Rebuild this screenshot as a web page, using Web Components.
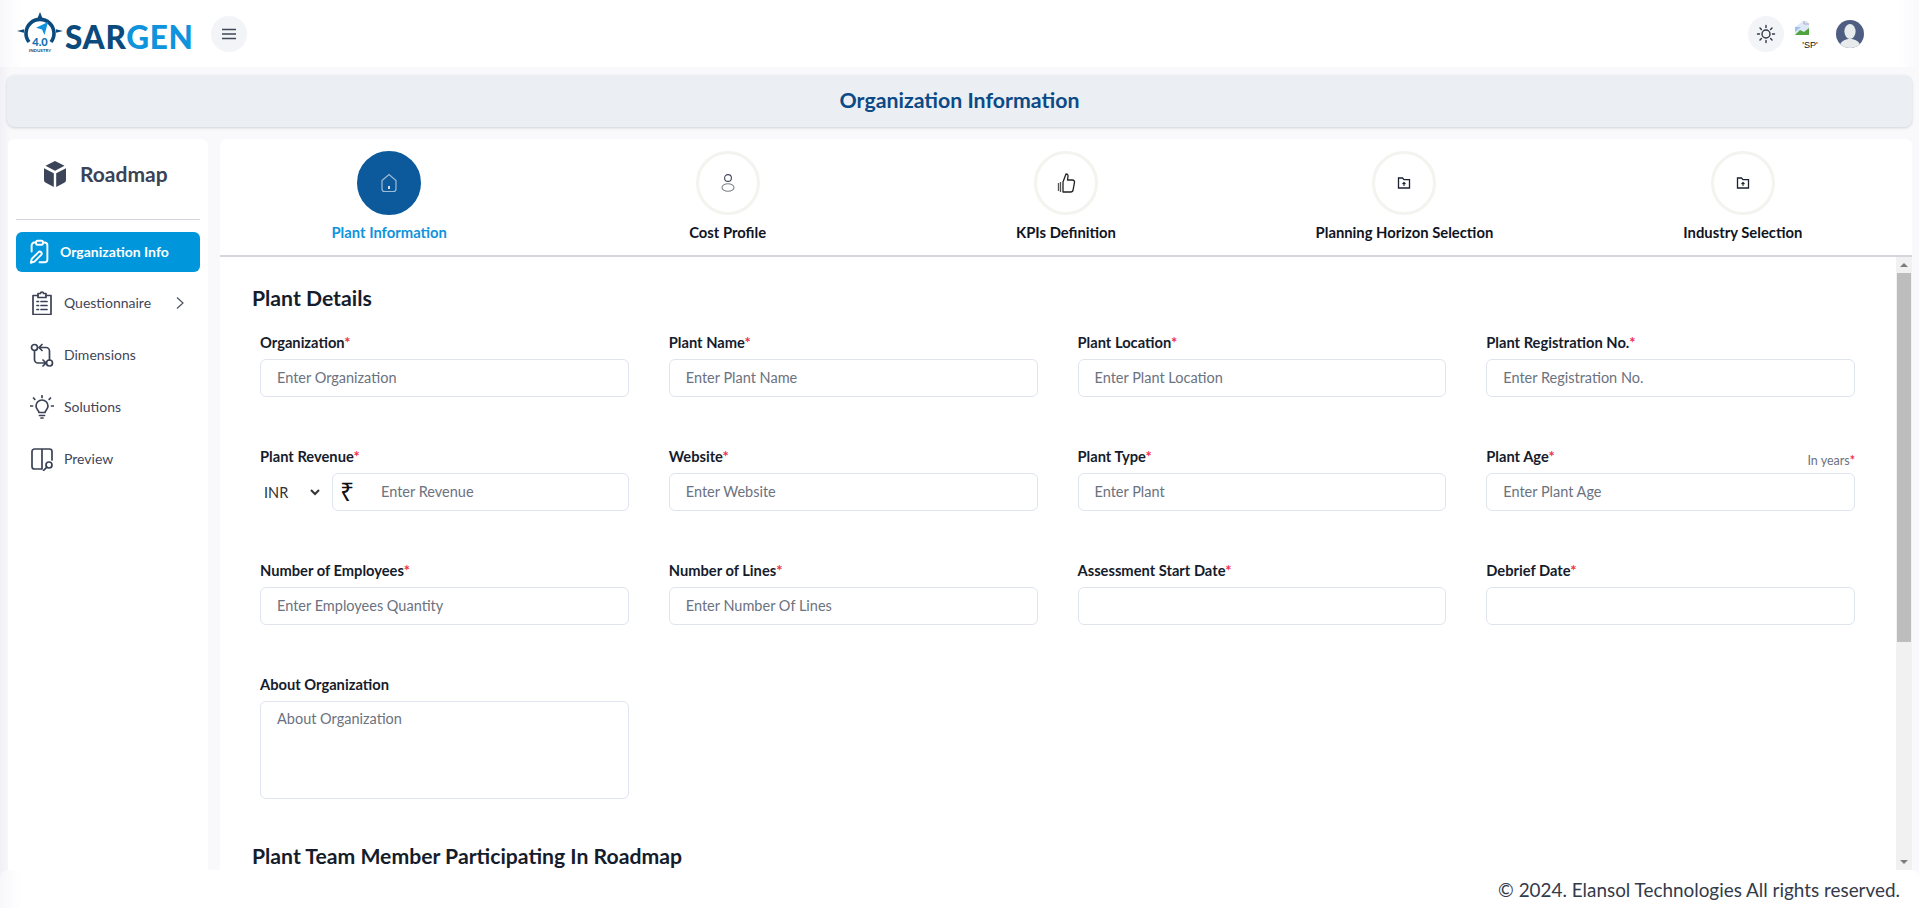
<!DOCTYPE html>
<html lang="en">
<head>
<meta charset="utf-8">
<title>Organization Information</title>
<style>
  html, body { margin: 0; height: 100%; }
  body { overflow: hidden; font-family: Lato, "Noto Sans", sans-serif; }
</style>
</head>
<body>
<app-shell></app-shell>

<script>
const FONT = `Lato, "Noto Sans", sans-serif`;

class AppShell extends HTMLElement {
  constructor() {
    super();
    this.attachShadow({ mode: "open" });
    this.shadowRoot.innerHTML = /*html*/ `
      <style>
        :host {
          display: flex;
          flex-direction: column;
          height: 908px;
          background: linear-gradient(to right, #f0f0f6 0, #f9f9fb 10px);
          font-family: ${FONT};
        }
        .body {
          flex: 1;
          min-height: 0;
          display: flex;
          gap: 12px;
          padding: 0 7px 0 8px;
        }
      </style>
      <app-header></app-header>
      <page-title>Organization Information</page-title>
      <div class="body">
        <side-nav></side-nav>
        <main-panel></main-panel>
      </div>
      <site-footer>© 2024. Elansol Technologies All rights reserved.</site-footer>
    `;
  }
}

class AppHeader extends HTMLElement {
  constructor() {
    super();
    this.attachShadow({ mode: "open" });
    this.shadowRoot.innerHTML = /*html*/ `
      <style>
        :host {
          display: flex;
          align-items: center;
          flex: 0 0 67px;
          box-sizing: border-box;
          padding: 0 55px 0 17px;
          background: linear-gradient(to right, #f8f8fb 0, #fff 22px, #fff calc(100% - 22px), #f9f9fb 100%);
        }
        .logo { display: flex; align-items: center; width: 194px; }
        .logo svg { display: block; flex: none; position: relative; top: -2px; }
        .word {
          font: 900 31.500px/1 ${FONT};
          letter-spacing: .7px;
          color: #0b4a7c;
          margin-left: 2px;
          position: relative;
          top: 4px;
        }
        .word b { font-weight: 900; color: #0f93dd; }
        .round {
          width: 36px;
          height: 36px;
          border-radius: 50%;
          background: #f3f4f8;
          display: grid;
          place-items: center;
        }
        .right { margin-left: auto; display: flex; align-items: center; }
        .broken {
          width: 24px;
          height: 28px;
          margin: 0 18px 0 10px;
          font: 9px/8px "Liberation Sans", sans-serif;
          color: #111;
          text-align: center;
        }
        .broken svg { display: block; margin-bottom: 5px; }
        .broken span { display: block; padding-left: 8px; white-space: nowrap; }
        .avatar { display: block; }
      </style>
      <div class="logo">
        <svg width="46" height="40" viewBox="0 0 46 40">
          <path d="M23 0l2.400 6h-4.800zM0 19l7-1.800v3.600zM46 19l-7-1.800v3.600z" fill="#0b4a7c"/>
          <path d="M12 30a14 14 0 1 1 22 0" fill="none" stroke="#0b4a7c" stroke-width="3.600"/>
          <path d="M31 10l-3.500 13-2.500-5.500-6-1.800z" fill="#0f93dd"/>
          <text x="23" y="34" text-anchor="middle" font-family="Lato" font-weight="900" font-size="11" fill="#0f6fb4">4.0</text>
          <text x="23" y="39.500" text-anchor="middle" font-family="Lato" font-weight="700" font-size="4.500" fill="#0b4a7c">INDUSTRY</text>
        </svg>
        <span class="word">SAR<b>GEN</b></span>
      </div>
      <div class="round">
        <svg width="18" height="18" viewBox="0 0 18 18" fill="none" stroke="#3f4757" stroke-width="1.400">
          <path d="M2 4.500h14M2 9h14M2 13.500h14"/>
        </svg>
      </div>
      <div class="right">
        <div class="round">
          <svg width="20" height="20" viewBox="0 0 20 20" fill="none" stroke="#2f3746" stroke-width="1.400" stroke-linecap="round">
            <circle cx="10" cy="10" r="4"/>
            <path d="M10 1.500v2M10 16.500v2M1.500 10h2M16.500 10h2M4 4l1.400 1.400M14.600 14.600L16 16M4 16l1.400-1.400M14.600 5.400L16 4"/>
          </svg>
        </div>
        <div class="broken">
          <svg width="16" height="16" viewBox="0 0 16 16">
            <path d="M1 7l8-6h4l2 3v11H1z" fill="#dfe8f7"/>
            <path d="M10 1v3h5" fill="none" stroke="#aab" stroke-width="1"/>
            <path d="M1 15l5-5 4 2 5-4v7z" fill="#4da53b"/>
            <path d="M1 7l6 0-6 5z" fill="#9fc0ef"/>
          </svg>
          <span>'SP'</span>
        </div>
        <svg class="avatar" width="28" height="28" viewBox="0 0 28 28">
          <defs><clipPath id="av"><circle cx="14" cy="14" r="14"/></clipPath></defs>
          <g clip-path="url(#av)">
            <rect width="28" height="28" fill="#505d83"/>
            <ellipse cx="14" cy="11.500" rx="5.600" ry="7.500" fill="#e7ebec"/>
            <path d="M3 28c1-7 6-9 11-9s10 2 11 9z" fill="#e7ebec"/>
          </g>
        </svg>
      </div>
    `;
  }
}

class PageTitle extends HTMLElement {
  constructor() {
    super();
    this.attachShadow({ mode: "open" });
    this.shadowRoot.innerHTML = /*html*/ `
      <style>
        :host {
          display: flex;
          align-items: center;
          justify-content: center;
          flex: 0 0 52px;
          margin: 8px 7px 12px 7px;
          border-radius: 8px;
          background: #ebeef3;
          box-shadow: 0 1px 3px rgba(0, 0, 0, .16);
          color: #0b4a86;
          font-size: 21.300px;
          line-height: 50px;
          font-weight: 700;
          padding-bottom: 2px;
          box-sizing: border-box;
        }
      </style>
      <slot></slot>
    `;
  }
}

const NAV_ICONS = {
  org: `<path d="M9 4H7.500A2.500 2.500 0 0 0 5 6.500V12M15 4h1.500A2.500 2.500 0 0 1 19 6.500V19a2.500 2.500 0 0 1-2.500 2.500H12"/><rect x="9" y="2.500" width="6" height="3.500" rx="1"/><path d="M4.300 22l.8-3.400 6-6a1.700 1.700 0 0 1 2.400 2.400l-6 6z"/>`,
  quest: `<path d="M8 4.500H3v19h18v-19h-5"/><path d="M8 2.500h2.500a1.500 1.500 0 0 1 3 0H16v4H8z"/><path d="M7 10.500h1.500M7 14.500h1.500M7 18.500h1.500M11 10.500h6M11 14.500h6M11 18.500h6"/>`,
  dim: `<circle cx="4.500" cy="4.500" r="3"/><circle cx="19.500" cy="20" r="3"/><path d="M4.500 7.500v9a3.500 3.500 0 0 0 3.500 3.500h8M13 17l3 3-3 3M19.500 17V8a3.500 3.500 0 0 0-3.500-3.500H9M12 1.500l-3 3 3 3"/>`,
  sol: `<path d="M9 17.500c0-2-3-3-3-6.500a6 6 0 0 1 12 0c0 3.500-3 4.500-3 6.500z"/><path d="M9.500 20.500h5M11 23h2M12 .8v1.700M3.500 3l1.300 1.300M20.500 3l-1.300 1.300M.5 11h2M21.500 11h2"/>`,
  prev: `<path d="M12 22H4.500A2.500 2.500 0 0 1 2 19.500v-15A2.500 2.500 0 0 1 4.500 2h15A2.500 2.500 0 0 1 22 4.500V13M12 2v20"/><circle cx="19" cy="18" r="3"/><path d="M16.800 20.200L13.500 23.500"/>`
};

class SideNav extends HTMLElement {
  constructor() {
    super();
    this.attachShadow({ mode: "open" });
    this.shadowRoot.innerHTML = /*html*/ `
      <style>
        :host {
          display: block;
          flex: 0 0 200px;
          box-sizing: border-box;
          background: #fff;
          border-radius: 6px 6px 0 0;
          padding: 0 8px;
        }
        .brand {
          height: 81px;
          display: flex;
          align-items: center;
          gap: 13px;
          padding: 0 0 11px 27px;
          box-sizing: border-box;
          border-bottom: 1px solid #d2d4dd;
          font-size: 21px;
          font-weight: 700;
          color: #3b4356;
        }
        .items { display: flex; flex-direction: column; gap: 12px; padding-top: 12px; }
      </style>
      <div class="brand">
        <svg width="24" height="26" viewBox="0 0 24 26" fill="#3b4458">
          <path d="M12 0l9.500 4.800L12 9.800 2.500 4.800z"/>
          <path d="M1 7.200l9.800 5V26L2.800 21.800A3 3 0 0 1 1 19z"/>
          <path d="M23 7.200l-9.800 5V26l8-4.200A3 3 0 0 0 23 19z"/>
        </svg>
        Roadmap
      </div>
      <div class="items">
        <nav-item icon="org" active>Organization Info</nav-item>
        <nav-item icon="quest" more>Questionnaire</nav-item>
        <nav-item icon="dim">Dimensions</nav-item>
        <nav-item icon="sol">Solutions</nav-item>
        <nav-item icon="prev">Preview</nav-item>
      </div>
    `;
  }
}

class NavItem extends HTMLElement {
  constructor() {
    super();
    this.attachShadow({ mode: "open" });
  }

  connectedCallback() {
    const more = this.hasAttribute("more")
      ? `<svg class="more" width="12" height="14" viewBox="0 0 12 14" fill="none" stroke="#4b5364" stroke-width="1.200"><path d="M3 1.500L9 7l-6 5.500"/></svg>`
      : "";
    const size = this.hasAttribute("active") ? 27 : 24;
    this.shadowRoot.innerHTML = /*html*/ `
      <style>
        :host {
          display: flex;
          align-items: center;
          height: 40px;
          box-sizing: border-box;
          padding: 0 0 3px 14px;
          gap: 10px;
          border-radius: 6px;
          font-size: 14px;
          color: #3f4658;
        }
        :host([active]) {
          background: #0096dc;
          color: #fff;
          font-weight: 700;
          padding: 0 0 2px 10px;
          gap: 7px;
        }
        svg.icon { flex: none; stroke: #3b4256; }
        :host([active]) svg.icon { stroke: #fff; }
        .more { margin-left: auto; margin-right: 14px; }
      </style>
      <svg class="icon" width="${size}" height="${size}" viewBox="0 0 24 24" fill="none" stroke-width="1.700" stroke-linecap="round" stroke-linejoin="round">${NAV_ICONS[this.getAttribute("icon")]}</svg>
      <span><slot></slot></span>
      ${more}
    `;
  }
}

const TAB_ICONS = {
  home: `<svg width="18" height="20" viewBox="0 0 18 20" fill="none" stroke="rgba(255,255,255,.6)" stroke-width="1.200"><path d="M2 7.500L9 1.500l7 6v8.500a2.500 2.500 0 0 1-2.500 2.500h-9A2.500 2.500 0 0 1 2 16z"/><path d="M9 13v3" stroke="#fff" stroke-width="1.600"/></svg>`,
  person: `<svg width="16" height="20" viewBox="0 0 16 20" fill="none" stroke="#3f4658" stroke-width="1.100"><circle cx="8" cy="5" r="3.400"/><ellipse cx="8" cy="14.500" rx="6" ry="3.700" stroke="#777d88"/></svg>`,
  thumb: `<svg width="20" height="22" viewBox="0 0 20 22" fill="none" stroke="#222" stroke-width="1.300" stroke-linejoin="round"><path d="M7 10l3-8c1.500 0 2.200 1 2 2.500L11.500 8H16.500a2 2 0 0 1 2 2.400l-1.400 7.500a2.500 2.500 0 0 1-2.500 2.100H7z"/><path d="M4.500 10v10M2.500 11v8" stroke="#555"/></svg>`,
  folder: `<svg width="14" height="14" viewBox="0 0 14 14" fill="none" stroke="#1b2130" stroke-width="1.300"><path d="M1.500 2h4l1.500 1.700h5.500v8.300h-11z"/><path d="M7 10V6.500M5.500 8L7 6.500 8.500 8" stroke-width="1.100"/></svg>`
};

class StepTab extends HTMLElement {
  constructor() {
    super();
    this.attachShadow({ mode: "open" });
  }

  connectedCallback() {
    this.shadowRoot.innerHTML = /*html*/ `
      <style>
        :host {
          display: flex;
          flex-direction: column;
          align-items: center;
          flex: 1 1 0;
          padding-top: 12px;
          font-size: 14.800px;
          font-weight: 700;
          color: #10141f;
        }
        :host([active]) { color: #0f93dd; }
        .dot {
          width: 64px;
          height: 64px;
          box-sizing: border-box;
          border-radius: 50%;
          border: 3px solid #f3f3ef;
          display: grid;
          place-items: center;
          margin-bottom: 8px;
        }
        :host([active]) .dot { background: #0c5a9c; border-color: #0c5a9c; }
      </style>
      <div class="dot">${TAB_ICONS[this.getAttribute("icon")]}</div>
      <span><slot></slot></span>
    `;
  }
}

class FormField extends HTMLElement {
  constructor() {
    super();
    this.attachShadow({ mode: "open" });
  }

  connectedCallback() {
    const star = this.hasAttribute("required") ? `<i>*</i>` : "";
    const hint = this.getAttribute("hint");
    const ph = this.getAttribute("placeholder") || "";
    const control = this.hasAttribute("area")
      ? `<textarea placeholder="${ph}"></textarea>`
      : `<input placeholder="${ph}">`;
    this.shadowRoot.innerHTML = /*html*/ `
      <style>
        :host { display: block; min-width: 0; }
        .top {
          display: flex;
          align-items: flex-end;
          justify-content: space-between;
          height: 20px;
          margin-bottom: 7px;
          font-size: 14.700px;
          font-weight: 700;
          line-height: 20px;
          color: #151c2c;
        }
        .top span { align-self: flex-start; }
        i { color: #ef2f4b; font-style: normal; font-weight: 700; }
        small {
          font-size: 12.500px;
          font-weight: 400;
          color: #6b7280;
          line-height: 14px;
          margin-bottom: -2px;
        }
        input, textarea {
          display: block;
          width: 100%;
          box-sizing: border-box;
          height: 38px;
          padding: 0 16px 2px;
          border: 1px solid #dfe4ee;
          border-radius: 6px;
          background: #fff;
          font: 14.500px ${FONT};
          color: #333;
          outline: none;
          resize: none;
        }
        textarea { height: 98px; padding: 8px 16px; }
        ::placeholder { color: #6b7280; opacity: 1; }
      </style>
      <div class="top">
        <span>${this.getAttribute("label")}${star}</span>
        ${hint ? `<small>${hint}<i>*</i></small>` : ""}
      </div>
      <slot name="control">${control}</slot>
    `;
  }
}

class RevenueInput extends HTMLElement {
  constructor() {
    super();
    this.attachShadow({ mode: "open" });
    this.shadowRoot.innerHTML = /*html*/ `
      <style>
        :host { display: flex; height: 38px; }
        select {
          flex: 0 0 63px;
          margin-right: 9px;
          border: none;
          background: #fff;
          font: 14.500px ${FONT};
          color: #333;
          outline: none;
          padding: 0;
        }
        .box {
          flex: 1;
          min-width: 0;
          display: flex;
          align-items: center;
          border: 1px solid #dfe4ee;
          border-radius: 6px;
          padding: 0 0 2px 7px;
        }
        .sign { flex: 0 0 41px; font: 25px/30px "Noto Sans", sans-serif; color: #111; }
        input {
          flex: 1;
          min-width: 0;
          border: none;
          outline: none;
          padding: 0;
          font: 14.500px ${FONT};
        }
        ::placeholder { color: #6b7280; opacity: 1; }
      </style>
      <select><option>INR</option></select>
      <div class="box">
        <span class="sign">₹</span>
        <input placeholder="Enter Revenue">
      </div>
    `;
  }
}

class ScrollBar extends HTMLElement {
  constructor() {
    super();
    this.attachShadow({ mode: "open" });
    this.shadowRoot.innerHTML = /*html*/ `
      <style>
        :host {
          display: flex;
          flex-direction: column;
          flex: 0 0 16px;
          background: #f1f1f1;
        }
        .btn { flex: 0 0 16px; display: grid; place-items: center; }
        .up { width: 0; height: 0; border: 4px solid transparent; border-top: none; border-bottom: 4px solid #7c7c7c; }
        .down { width: 0; height: 0; border: 4px solid transparent; border-bottom: none; border-top: 4px solid #7c7c7c; }
        .thumb { flex: 0 0 369px; margin: 0 1px; background: #bdbdbd; }
        .rest { flex: 1; }
      </style>
      <div class="btn"><div class="up"></div></div>
      <div class="thumb"></div>
      <div class="rest"></div>
      <div class="btn"><div class="down"></div></div>
    `;
  }
}

class MainPanel extends HTMLElement {
  constructor() {
    super();
    this.attachShadow({ mode: "open" });
    this.shadowRoot.innerHTML = /*html*/ `
      <style>
        :host {
          display: flex;
          flex-direction: column;
          flex: 1;
          min-width: 0;
          background: #fff;
          border-radius: 6px 6px 0 0;
        }
        .tabs {
          display: flex;
          flex: 0 0 118px;
          box-sizing: border-box;
          border-bottom: 2px solid #d3d6da;
        }
        .lower { flex: 1; min-height: 0; display: flex; }
        .scroll { flex: 1; min-width: 0; overflow: hidden; }
        .content { padding: 27px 41px 0 32px; }
        h2 {
          margin: 0;
          font-size: 21.200px;
          line-height: 28px;
          font-weight: 700;
          color: #151c2c;
        }
        .grid {
          display: grid;
          grid-template-columns: repeat(4, 1fr);
          column-gap: 40px;
          row-gap: 49px;
          padding: 20px 0 0 8px;
          margin-bottom: 43px;
        }
      </style>
      <div class="tabs">
        <step-tab icon="home" active>Plant Information</step-tab>
        <step-tab icon="person">Cost Profile</step-tab>
        <step-tab icon="thumb">KPIs Definition</step-tab>
        <step-tab icon="folder">Planning Horizon Selection</step-tab>
        <step-tab icon="folder">Industry Selection</step-tab>
      </div>
      <div class="lower">
        <div class="scroll">
          <div class="content">
            <h2>Plant Details</h2>
            <div class="grid">
              <form-field label="Organization" required placeholder="Enter Organization"></form-field>
              <form-field label="Plant Name" required placeholder="Enter Plant Name"></form-field>
              <form-field label="Plant Location" required placeholder="Enter Plant Location"></form-field>
              <form-field label="Plant Registration No." required placeholder="Enter Registration No."></form-field>
              <form-field label="Plant Revenue" required><revenue-input slot="control"></revenue-input></form-field>
              <form-field label="Website" required placeholder="Enter Website"></form-field>
              <form-field label="Plant Type" required placeholder="Enter Plant"></form-field>
              <form-field label="Plant Age" required hint="In years" placeholder="Enter Plant Age"></form-field>
              <form-field label="Number of Employees" required placeholder="Enter Employees Quantity"></form-field>
              <form-field label="Number of Lines" required placeholder="Enter Number Of Lines"></form-field>
              <form-field label="Assessment Start Date" required></form-field>
              <form-field label="Debrief Date" required></form-field>
              <form-field label="About Organization" area placeholder="About Organization"></form-field>
            </div>
            <h2>Plant Team Member Participating In Roadmap</h2>
          </div>
        </div>
        <scroll-bar></scroll-bar>
      </div>
    `;
  }
}

class SiteFooter extends HTMLElement {
  constructor() {
    super();
    this.attachShadow({ mode: "open" });
    this.shadowRoot.innerHTML = /*html*/ `
      <style>
        :host {
          display: flex;
          align-items: center;
          justify-content: flex-end;
          flex: 0 0 38px;
          box-sizing: border-box;
          padding-right: 19px;
          border-radius: 8px 8px 0 0;
          background: linear-gradient(to right, #f8f8fb 0, #fff 22px);
          font-size: 18.900px;
          color: #333a4a;
        }
      </style>
      <slot></slot>
    `;
  }
}

customElements.define("app-shell", AppShell);
customElements.define("app-header", AppHeader);
customElements.define("page-title", PageTitle);
customElements.define("side-nav", SideNav);
customElements.define("nav-item", NavItem);
customElements.define("step-tab", StepTab);
customElements.define("form-field", FormField);
customElements.define("revenue-input", RevenueInput);
customElements.define("scroll-bar", ScrollBar);
customElements.define("main-panel", MainPanel);
customElements.define("site-footer", SiteFooter);
</script>
</body>
</html>
